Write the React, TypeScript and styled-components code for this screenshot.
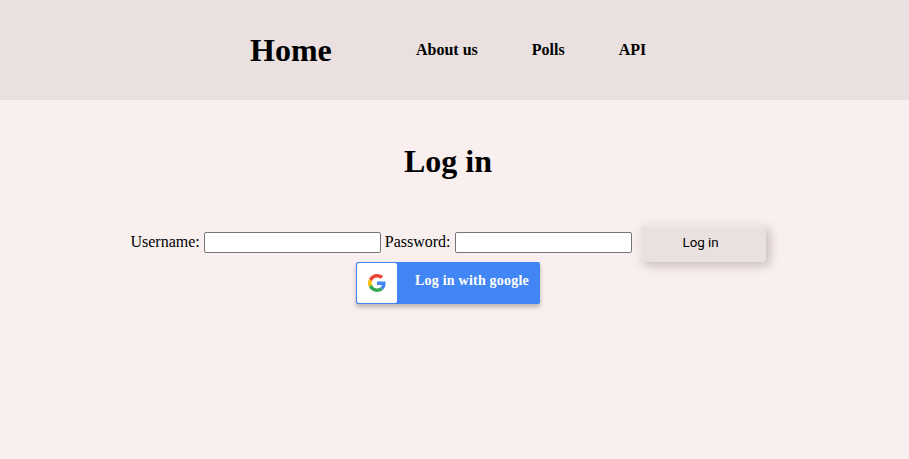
import React from "react";
import styled, { createGlobalStyle } from "styled-components";

const GlobalStyle = createGlobalStyle`
  body {
    margin: 0;
    min-height: 100vh;
    background: #f8efee;
    color: #000;
    font-family: "Liberation Serif", "Times New Roman", serif;
    font-size: 16px;
  }
`;

const Header = styled.header`
  box-sizing: border-box;
  height: 100px;
  padding-left: 250px;
  display: flex;
  align-items: center;
  background: #e9e0df;
`;

const HomeLink = styled.a`
  width: 166px;
  font-size: 32px;
  line-height: 36px;
  font-weight: bold;
`;

const Nav = styled.nav`
  display: flex;
  gap: 54px;
`;

const NavLink = styled.a`
  font-weight: bold;
  line-height: 18px;
`;

const Main = styled.main`
  width: 896px;
  display: flex;
  flex-direction: column;
  align-items: center;
`;

const Title = styled.h1`
  margin: 43px 0 46px;
  font-size: 32px;
  line-height: 36px;
`;

const LoginForm = styled.form`
  display: flex;
  align-items: flex-start;
  height: 37px;
`;

const Label = styled.label`
  display: flex;
  align-items: center;
  gap: 4px;
  margin: 7px 4px 0 0;
  line-height: 18px;
  white-space: nowrap;
`;

const LabelText = styled.span`
  margin-top: -2px;
`;

const Input = styled.input`
  box-sizing: border-box;
  width: 177px;
  height: 21px;
  margin: 0;
  padding: 1px 2px;
  border: 1px solid #767676;
  border-radius: 2px;
  background: #fff;
`;

const SubmitButton = styled.button`
  width: 126px;
  height: 37px;
  margin: 0 0 0 4px;
  padding: 0 4px 2px 0;
  border: 0;
  border-radius: 4px;
  background: #e9e0df;
  color: #000;
  font: 13.333px Roboto, Arial, sans-serif;
  box-shadow:
    inset 1px 2px 2px rgba(255, 255, 255, 0.28),
    4px 4px 10px rgba(80, 60, 60, 0.25),
    0 0 20px rgba(80, 60, 60, 0.03);
`;

const GoogleButton = styled.a`
  box-sizing: border-box;
  width: 184px;
  height: 42px;
  padding: 1px;
  display: flex;
  background: #4285f4;
  border-radius: 2px;
  box-shadow: 0 3px 4px rgba(0, 0, 0, 0.25);
`;

const IconBox = styled.span`
  width: 40px;
  height: 40px;
  display: flex;
  align-items: center;
  justify-content: center;
  border-radius: 2px;
  background: #fff;
`;

const GoogleText = styled.span`
  margin: 10px 0 0 18px;
  color: #fff;
  font-size: 14px;
  font-weight: bold;
  line-height: 16px;
  letter-spacing: 0.22px;
  white-space: nowrap;
`;

const GoogleLogo = () => (
  <svg width="18" height="18" viewBox="0 0 48 48" aria-hidden="true">
    <path fill="#EA4335" d="M24 9.5c3.54 0 6.71 1.22 9.21 3.6l6.85-6.85C35.9 2.38 30.47 0 24 0 14.62 0 6.51 5.38 2.56 13.22l7.98 6.19C12.43 13.72 17.74 9.5 24 9.5z" />
    <path fill="#4285F4" d="M46.98 24.55c0-1.57-.15-3.09-.38-4.55H24v9.02h12.94c-.58 2.96-2.26 5.48-4.78 7.18l7.73 6c4.51-4.18 7.09-10.36 7.09-17.65z" />
    <path fill="#FBBC05" d="M10.53 28.59c-.48-1.45-.76-2.99-.76-4.59s.27-3.14.76-4.59l-7.98-6.19C.92 16.46 0 20.12 0 24c0 3.88.92 7.54 2.56 10.78l7.97-6.19z" />
    <path fill="#34A853" d="M24 48c6.48 0 11.93-2.13 15.89-5.81l-7.73-6c-2.15 1.45-4.92 2.3-8.16 2.3-6.26 0-11.57-4.22-13.47-9.91l-7.98 6.19C6.51 42.62 14.62 48 24 48z" />
  </svg>
);

export default function App() {
  return (
    <>
      <GlobalStyle />
      <Header>
        <HomeLink>Home</HomeLink>
        <Nav>
          <NavLink>About us</NavLink>
          <NavLink>Polls</NavLink>
          <NavLink>API</NavLink>
        </Nav>
      </Header>
      <Main>
        <Title>Log in</Title>
        <LoginForm>
          <Label>
            <LabelText>Username:</LabelText>
            <Input type="text" />
          </Label>
          <Label>
            <LabelText>Password:</LabelText>
            <Input type="password" />
          </Label>
          <SubmitButton type="button">Log in</SubmitButton>
        </LoginForm>
        <GoogleButton>
          <IconBox>
            <GoogleLogo />
          </IconBox>
          <GoogleText>Log in with google</GoogleText>
        </GoogleButton>
      </Main>
    </>
  );
}
